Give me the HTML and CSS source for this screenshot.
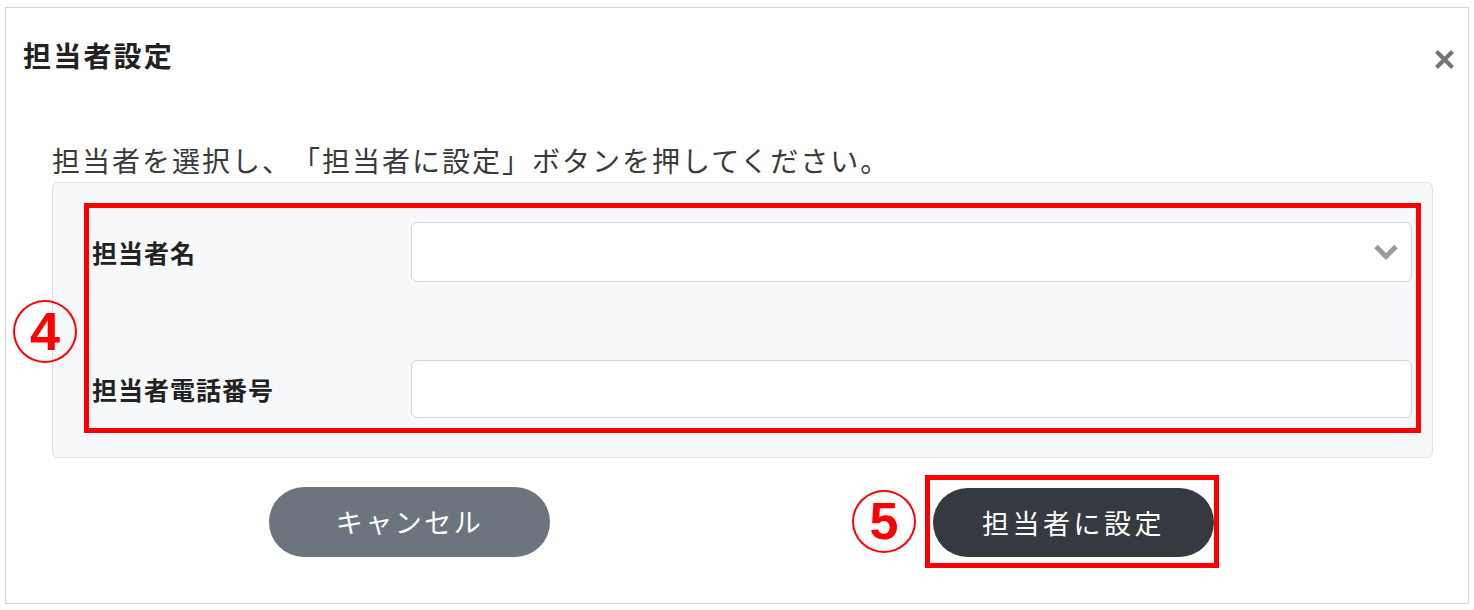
FILE: index.html
```html
<!DOCTYPE html>
<html lang="ja">
<head>
    <meta charset="UTF-8">
    <meta name="viewport" content="width=device-width, initial-scale=1.0">
    <title>担当者設定</title>
    <link rel="stylesheet" href="styles.css">
</head>
<body>
    <div class="modal">
        <div class="modal-header">
            <h1 class="modal-title">担当者設定</h1>
            <button class="close" aria-label="閉じる">
                <svg width="21" height="21" viewBox="0 0 21 21">
                    <path d="M2.5 2.5 L18.5 18.5 M18.5 2.5 L2.5 18.5" stroke="#757575" stroke-width="4.2" fill="none"/>
                </svg>
            </button>
        </div>

        <div class="modal-body">
            <p class="lead">担当者を選択し、「担当者に設定」ボタンを押してください。</p>

            <div class="panel">
                <span class="mark mark-4">4</span>
                <div class="highlight">
                    <div class="form-row">
                        <label class="form-label">担当者名</label>
                        <div class="select">
                            <span></span>
                            <svg width="26" height="18" viewBox="0 0 26 18">
                                <path d="M3 3.5 L13 13.5 L23 3.5" stroke="#9a9a9a" stroke-width="5" fill="none"/>
                            </svg>
                        </div>
                    </div>
                    <div class="form-row phone">
                        <label class="form-label">担当者電話番号</label>
                        <div class="input"></div>
                    </div>
                </div>
            </div>

            <div class="actions">
                <button class="btn btn-cancel">キャンセル</button>
                <span class="mark mark-5">5</span>
                <div class="highlight-btn">
                    <button class="btn btn-submit">担当者に設定</button>
                </div>
            </div>
        </div>
    </div>
</body>
</html>
```

FILE: styles.css
```css
body {
    margin: 0;
    background: #fff;
    font-family: "Noto Sans CJK JP", sans-serif;
    color: #212529;
    text-spacing-trim: space-all;
}

.modal {
    margin: 7px 0 0 5px;
    width: 1462px;
    height: 595px;
    border: 1px solid #d4d4d4;
}

.modal-header {
    display: flex;
    justify-content: space-between;
    align-items: flex-start;
    padding: 27px 13px 0 17px;
}

.modal-title {
    margin: 0;
    font-size: 28px;
    line-height: 40px;
    font-weight: bold;
    letter-spacing: 2.2px;
    color: #222;
}

.close {
    margin-top: 14px;
    padding: 0;
    border: none;
    background: none;
    width: 21px;
    height: 21px;
    cursor: pointer;
}

.modal-body {
    padding: 0 35px 0 46px;
}

.lead {
    margin: 65px 0 2px 0;
    font-size: 28px;
    line-height: 40px;
    letter-spacing: 2px;
    color: #3a3a3a;
}

.panel {
    position: relative;
    background: #f7f8fa;
    border: 1px solid #dee2e6;
    border-radius: 6px;
    padding: 20px 11px 24px 31px;
}

.highlight {
    border: 5px solid #ff0000;
    padding: 14px 4px 10px 3px;
}

.form-row {
    display: flex;
    align-items: center;
}

.form-row.phone {
    margin-top: 78px;
}

.form-label {
    width: 319px;
    flex-shrink: 0;
    font-size: 25px;
    font-weight: bold;
    letter-spacing: 1px;
    color: #222;
}

.select,
.input {
    flex: 1;
    box-sizing: border-box;
    background: #fff;
    border: 1px solid #ced4da;
    border-radius: 6px;
}

.select {
    height: 60px;
    display: flex;
    justify-content: space-between;
    align-items: center;
    padding-right: 12px;
}

.input {
    height: 58px;
}

.mark {
    position: absolute;
    box-sizing: border-box;
    width: 64px;
    height: 63px;
    border: 2px solid #ff0000;
    border-radius: 50%;
    color: #ff0000;
    font-family: "Liberation Sans", Arial, sans-serif;
    font-weight: bold;
    font-size: 54px;
    line-height: 59px;
    text-align: center;
}

.mark-4 {
    left: -40px;
    top: 117px;
}

.actions {
    display: flex;
    align-items: center;
    margin-top: 17px;
}

.actions .mark-5 {
    position: static;
    margin-left: 302px;
    font-size: 52px;
}

.highlight-btn {
    margin-left: 9px;
    border: 5px solid #ff0000;
    padding: 8px 0 6px 3px;
}

.btn {
    width: 281px;
    height: 70px;
    border: none;
    border-radius: 35px;
    color: #fff;
    font-family: "Noto Sans CJK JP", sans-serif;
    font-size: 27px;
    letter-spacing: 2.5px;
    cursor: pointer;
}

.btn-cancel {
    margin-left: 217px;
    background: #6c757d;
}

.btn-submit {
    display: block;
    height: 69px;
    background: #343a40;
    letter-spacing: 3.5px;
}
```
